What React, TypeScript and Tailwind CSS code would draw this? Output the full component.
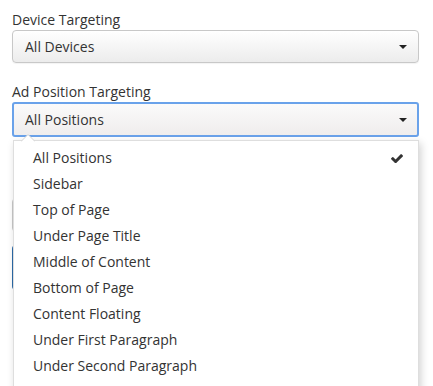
import React from "react";

const Caret = () => (
  <svg width="8" height="4" viewBox="0 0 8 4" className="block">
    <path d="M0 0 L8 0 L4 4 Z" fill="#222" />
  </svg>
);

const Check = () => (
  <svg width="12" height="9" viewBox="121 370 1550 1056" className="block">
    <path
      fill="#333"
      d="M1671 566q0 40-28 68l-724 724-136 136q-28 28-68 28t-68-28l-136-136-362-362q-28-28-28-68t28-68l136-136q28-28 68-28t68 28l294 295 656-657q28-28 68-28t68 28l136 136q28 28 28 68z"
    />
  </svg>
);

const items = [
  "All Positions",
  "Sidebar",
  "Top of Page",
  "Under Page Title",
  "Middle of Content",
  "Bottom of Page",
  "Content Floating",
  "Under First Paragraph",
  "Under Second Paragraph",
];

export default function App() {
  return (
    <div
      className="relative w-[433px] h-[386px] overflow-hidden bg-white text-[#333] text-[14px]"
      style={{ fontFamily: '"Open Sans", sans-serif' }}
    >
      <div className="flex flex-col pl-[12px] pr-[14px] pt-[10px]">
        <div className="h-[20px] leading-[20px]">Device Targeting</div>
        <div className="h-[33px] flex items-center justify-between rounded-[4px] border border-[#c8c8c8] bg-gradient-to-b from-white to-[#ececec] pl-[12px] pr-[11px] shadow-[0_1px_1px_rgba(0,0,0,0.05)]">
          <span className="leading-[20px]">All Devices</span>
          <Caret />
        </div>
        <div className="mt-[19px] h-[20px] leading-[20px]">Ad Position Targeting</div>
        <div className="h-[35px] flex items-center justify-between rounded-[3px] border-2 border-[#6aa2ea] bg-gradient-to-b from-[#fbfafa] to-[#efeded] pl-[11px] pr-[10px]">
          <span className="leading-[20px]">All Positions</span>
          <Caret />
        </div>
        <div className="mt-[61px] h-[34px] rounded-[4px] border border-[#c8c8c8] bg-[#f4f4f4]" />
        <div className="mt-[13px] h-[45px] rounded-[4px] bg-[#2c6aa8]" />
      </div>

      {/* dropdown menu */}
      <div className="absolute left-[13px] top-[140px] w-[406px] h-[260px] bg-white border border-[#dedede] shadow-[2px_3px_8px_rgba(0,0,0,0.18)] pt-[4px]">
        {items.map((it, i) => (
          <div
            key={it}
            className="h-[26px] leading-[26px] pl-[19px] pr-[15px] flex items-center justify-between"
          >
            <span className="leading-[26px]">{it}</span>
            {i === 0 && <Check />}
          </div>
        ))}
      </div>
      <svg
        className="absolute left-[21px] top-[134px]"
        width="14"
        height="8"
        viewBox="0 0 14 8"
      >
        <path d="M0 7.5 L7 0.5 L14 7.5" fill="white" stroke="#d4d4d4" strokeWidth="1" />
      </svg>
    </div>
  );
}
